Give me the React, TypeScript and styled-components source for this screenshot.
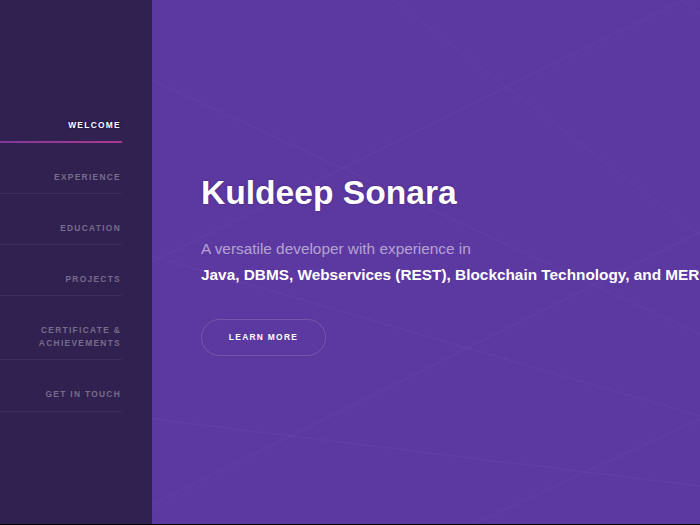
import { createGlobalStyle, styled } from "styled-components"

const GlobalStyle = createGlobalStyle`
  html, body {
    margin: 0;
    padding: 0;
    background: #000;
    overflow: hidden;
  }
`

const links = [
    { title: "Welcome", active: true },
    { title: "Experience" },
    { title: "Education" },
    { title: "Projects" },
    { title: "Certificate & Achievements" },
    { title: "Get in touch" },
]

const lines = [
    [393, 0, 700, 235],
    [683, 0, 700, 15],
    [152, 80, 700, 334],
    [152, 262, 683, 0],
    [152, 256, 700, 416],
    [152, 505, 700, 232],
    [152, 419, 700, 486],
    [473, 524, 700, 419],
]

export default function App() {
    return (
        <Page>
            <GlobalStyle />
            <Sidebar>
                <Nav>
                    {links.map(link => (
                        <NavItem key={link.title} $active={link.active}>
                            {link.title}
                        </NavItem>
                    ))}
                </Nav>
            </Sidebar>
            <Main>
                <Lines viewBox="152 0 548 524">
                    {lines.map(l => (
                        <line key={l.join("-")} x1={l[0]} y1={l[1]} x2={l[2]} y2={l[3]} />
                    ))}
                </Lines>
                <Title>Kuldeep Sonara</Title>
                <Subtitle>A versatile developer with experience in</Subtitle>
                <Skills>Java, DBMS, Webservices (REST), Blockchain Technology, and MERN Stack</Skills>
                <LearnMore>Learn more</LearnMore>
            </Main>
        </Page>
    )
}

const Page = styled.div`
  display: flex;
  width: 700px;
  height: 524px;
  font-family: "Liberation Sans", Arial, sans-serif;
`

const Sidebar = styled.aside`
  flex: 0 0 152px;
  box-sizing: border-box;
  padding-top: 91px;
  background-color: #312150;
`

const Nav = styled.nav`
  display: flex;
  flex-direction: column;
  width: 122px;
`

const NavItem = styled.a<{ $active?: boolean }>`
  display: block;
  padding: 28px 1px 9.1px 30px;
  font-size: 8.4px;
  font-weight: 700;
  line-height: 13px;
  letter-spacing: 1.3px;
  text-align: right;
  text-transform: uppercase;
  color: ${props => (props.$active ? "#fff" : "rgba(255, 255, 255, 0.35)")};
  text-shadow: ${props => (props.$active ? "0 0 2px #12062b" : "none")};
  border-bottom: ${props => (props.$active ? "2px solid #a23a94" : "1px solid rgba(255, 255, 255, 0.05)")};
  border-image: ${props =>
        props.$active ? "linear-gradient(to right, #7f3a9b, #ad388f) 1" : "none"};
`

const Main = styled.main`
  position: relative;
  display: flex;
  flex-direction: column;
  justify-content: center;
  align-items: flex-start;
  flex: 1;
  min-width: 0;
  box-sizing: border-box;
  padding: 4px 0 0 49px;
  overflow: hidden;
  background-color: #5c38a1;
`

const Lines = styled.svg`
  position: absolute;
  inset: 0;
  width: 100%;
  height: 100%;

  line {
    stroke: rgba(255, 255, 255, 0.045);
    stroke-width: 1;
  }
`

const Title = styled.h1`
  position: relative;
  margin: 0;
  font-size: 33.6px;
  font-weight: 700;
  line-height: 40px;
  color: #fff;
  text-shadow: 0 0 2px rgba(40, 15, 90, 0.6);
`

const Subtitle = styled.p`
  position: relative;
  margin: 23px 0 0;
  font-size: 15.36px;
  line-height: 26px;
  color: rgba(255, 255, 255, 0.55);
`

const Skills = styled.p`
  position: relative;
  margin: 0;
  font-size: 15.36px;
  font-weight: 700;
  line-height: 26px;
  white-space: nowrap;
  color: #fff;
`

const LearnMore = styled.a`
  position: relative;
  display: flex;
  align-items: center;
  justify-content: center;
  box-sizing: border-box;
  width: 125px;
  height: 37px;
  margin-top: 31px;
  border: 1px solid rgba(255, 255, 255, 0.15);
  border-radius: 18.5px;
  font-size: 8.4px;
  font-weight: 700;
  letter-spacing: 1.3px;
  text-transform: uppercase;
  color: #fff;
`
